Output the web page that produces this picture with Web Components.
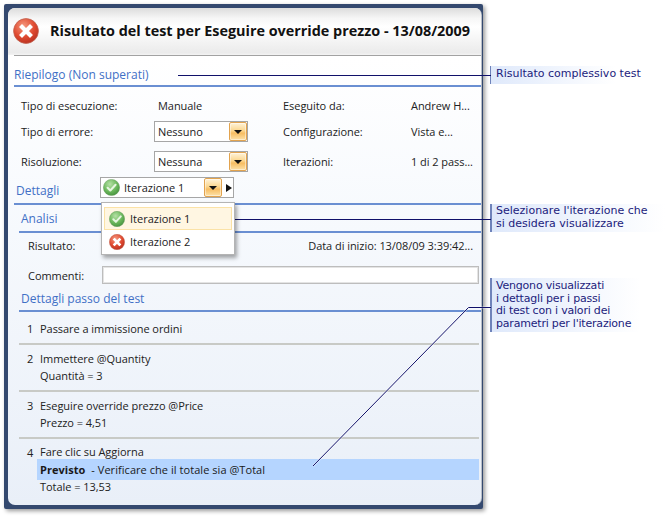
<!DOCTYPE html>
<html lang="it">
<head>
<meta charset="utf-8">
<title>Risultato del test</title>
<style>
html, body { margin: 0; padding: 0; background: #fff; }
body { font: 11px "Open Sans", "Liberation Sans", sans-serif; color: #222; letter-spacing: -0.05px; }
</style>
</head>
<body>
<test-page>
    <result-window slot="window" heading="Risultato del test per Eseguire override prezzo - 13/08/2009">
        <section-head style="margin-left:6px;height:19px;padding-top:10px;">Riepilogo (Non superati)</section-head>
        <summary-grid>
            <span>Tipo di esecuzione:</span><span>Manuale</span><span>Eseguito da:</span><span>Andrew H...</span>
            <span>Tipo di errore:</span><combo-box>Nessuno</combo-box><span>Configurazione:</span><span>Vista e...</span>
            <span>Risoluzione:</span><combo-box>Nessuna</combo-box><span>Iterazioni:</span><span>1 di 2 pass...</span>
        </summary-grid>
        <section-head style="margin-left:6px;padding-left:2px;height:21px;padding-top:10px;">Dettagli<iteration-picker></iteration-picker></section-head>
        <section-head style="margin-left:11px;padding-left:2px;height:21px;padding-top:5px;">Analisi</section-head>
        <info-row></info-row>
        <comment-row></comment-row>
        <section-head style="margin-left:11px;padding-left:2px;height:20px;padding-top:6px;">Dettagli passo del test</section-head>
        <test-step num="1" style="padding:8px 0 6px;"><span>Passare a immissione ordini</span></test-step>
        <test-step num="2"><span>Immettere @Quantity</span><span>Quantità = 3</span></test-step>
        <test-step num="3"><span>Eseguire override prezzo @Price</span><span>Prezzo = 4,51</span></test-step>
        <test-step num="4" last><span style="height:15px;line-height:15px;">Fare clic su Aggiorna</span><expected-line><b>Previsto</b>&nbsp; - Verificare che il totale sia @Total</expected-line><span style="height:13px;line-height:13px;">Totale = 13,53</span></test-step>
    </result-window>
    <call-out slot="notes" style="margin-top:66px;padding-top:2px;padding-bottom:3px;border-left-width:1px;padding-left:5px;">Risultato complessivo test</call-out>
    <call-out slot="notes" style="margin-top:120.5px;width:175px;">Selezionare l'iterazione che<br>si desidera visualizzare</call-out>
    <call-out slot="notes" style="margin-top:46px;width:150px;padding-top:2px;letter-spacing:-0.2px;">Vengono visualizzati<br>i dettagli per i passi<br>di test con i valori dei<br>parametri per l'iterazione</call-out>
</test-page>

<script>
class StatusIcon extends HTMLElement {
    constructor() {
        super();
        const shadowRoot = this.attachShadow({mode: 'open'});
        const fail = this.getAttribute('type') === 'fail';
        const size = this.getAttribute('size') || 16;
        const id = fail ? 'r' : 'g';
        const stops = fail
            ? '<stop offset="0" stop-color="#f59a80"/><stop offset=".55" stop-color="#e04a30"/><stop offset="1" stop-color="#b02a1c"/>'
            : '<stop offset="0" stop-color="#b5e0a5"/><stop offset=".55" stop-color="#6cb85c"/><stop offset="1" stop-color="#3c8a38"/>';
        const mark = fail
            ? '<path d="M9 9 L17 17 M17 9 L9 17" stroke="#fff" stroke-width="4.2" stroke-linecap="square" fill="none"/>'
            : '<path d="M7 13.4 L11.2 17.6 L19.2 8.8" stroke="#e6f5e0" stroke-width="3.2" stroke-linecap="round" stroke-linejoin="round" fill="none"/>';
        shadowRoot.innerHTML = '<style>:host{display:inline-block;line-height:0;flex:none} svg{display:block}</style>' +
            '<svg width="' + size + '" height="' + size + '" viewBox="0 0 26 26">' +
            '<defs><radialGradient id="' + id + '" cx=".4" cy=".3" r=".8">' + stops + '</radialGradient></defs>' +
            '<circle cx="13" cy="13" r="12.4" fill="url(#' + id + ')" stroke="' + (fail ? '#c0604c' : '#6b9c60') + '" stroke-width=".8"/>' +
            mark + '</svg>';
    }
}
customElements.define('status-icon', StatusIcon);

class DropButton extends HTMLElement {
    constructor() {
        super();
        const shadowRoot = this.attachShadow({mode: 'open'});
        shadowRoot.innerHTML = '<style>' +
            ':host{display:flex;align-items:center;justify-content:center;width:18px;height:100%;box-sizing:border-box;' +
            'border:1px solid #e2a34e;border-radius:2px;background:linear-gradient(#fff3d8,#fbd68e 45%,#f7bd62 60%,#fde2a8);box-shadow:inset 0 0 0 1px rgba(255,255,255,.45)}' +
            'i{display:block;width:0;height:0;border:4px solid transparent;border-top:4px solid #111;border-bottom:0}' +
            '</style><i></i>';
    }
}
customElements.define('drop-button', DropButton);

class ComboBox extends HTMLElement {
    constructor() {
        super();
        const shadowRoot = this.attachShadow({mode: 'open'});
        shadowRoot.innerHTML = '<style>' +
            ':host{display:flex;align-items:center;justify-content:space-between;width:94px;height:21px;box-sizing:border-box;' +
            'border:1px solid #a6a6a6;background:#fff;padding-left:3px}' +
            '</style><slot></slot><drop-button></drop-button>';
    }
}
customElements.define('combo-box', ComboBox);

class IterationPicker extends HTMLElement {
    constructor() {
        super();
        const shadowRoot = this.attachShadow({mode: 'open'});
        shadowRoot.innerHTML = '<style>' +
            ':host{display:block;position:absolute;left:86px;top:5px;width:134px;height:21px;color:#222;font-size:11px}' +
            '.box{display:flex;align-items:center;height:100%;box-sizing:border-box;border:1px solid #a6a6a6;background:#fff;padding-left:2px}' +
            '.label{margin-left:4px;flex:1}' +
            '.arrow{width:0;height:0;border:4px solid transparent;border-left:6px solid #111;border-right:0;margin:0 1px 0 4px}' +
            '.menu{position:absolute;left:1px;top:25px;width:134px;height:53px;box-sizing:border-box;border:1px solid #b4b4b4;background:#fff;padding:4px 2px;box-shadow:2px 3px 4px rgba(0,0,0,.35);z-index:2}' +
            '.item{display:flex;align-items:center;height:23px;box-sizing:border-box;padding-left:4px;border:1px solid transparent}' +
            '.item span{margin-left:5px}' +
            '.on{background:#fff6e2;border-color:#fbe2a6}' +
            '</style>' +
            '<div class="box"><status-icon size="17"></status-icon><span class="label">Iterazione 1</span><drop-button></drop-button><i class="arrow"></i></div>' +
            '<div class="menu">' +
            '<div class="item on"><status-icon size="16"></status-icon><span>Iterazione 1</span></div>' +
            '<div class="item"><status-icon type="fail" size="16"></status-icon><span>Iterazione 2</span></div>' +
            '</div>';
    }
}
customElements.define('iteration-picker', IterationPicker);

class SectionHead extends HTMLElement {
    constructor() {
        super();
        const shadowRoot = this.attachShadow({mode: 'open'});
        shadowRoot.innerHTML = '<style>' +
            ':host{display:block;position:relative;font-size:12px;line-height:18px;letter-spacing:0;color:#3f70c6;border-bottom:2px solid #6a8fd2}' +
            '</style><slot></slot>';
    }
}
customElements.define('section-head', SectionHead);

class SummaryGrid extends HTMLElement {
    constructor() {
        super();
        const shadowRoot = this.attachShadow({mode: 'open'});
        shadowRoot.innerHTML = '<style>' +
            ':host{display:grid;grid-template-columns:133px 129px 128px 1fr;grid-template-rows:34px 30px 21px;margin-left:13px;line-height:21px}' +
            '::slotted(span:nth-child(-n+4)){padding-top:8px}' +
            '::slotted(span:nth-child(2)){padding-left:4px}' +
            '</style><slot></slot>';
    }
}
customElements.define('summary-grid', SummaryGrid);

class InfoRow extends HTMLElement {
    constructor() {
        super();
        const shadowRoot = this.attachShadow({mode: 'open'});
        shadowRoot.innerHTML = '<style>' +
            ':host{display:flex;justify-content:space-between;height:33px;box-sizing:border-box;padding:5px 8px 0 20px;line-height:16px}' +
            '</style><span>Risultato:</span><span>Data di inizio: 13/08/09 3:39:42...</span>';
    }
}
customElements.define('info-row', InfoRow);

class CommentRow extends HTMLElement {
    constructor() {
        super();
        const shadowRoot = this.attachShadow({mode: 'open'});
        shadowRoot.innerHTML = '<style>' +
            ':host{display:flex;align-items:center;height:18px;padding:0 2px 0 20px}' +
            'span{width:74px;flex:none}' +
            'div{flex:1;height:100%;box-sizing:border-box;border:1px solid #bdbdbd;box-shadow:inset 0 0 0 1px #e4e4e4;background:#fff}' +
            '</style><span>Commenti:</span><div></div>';
    }
}
customElements.define('comment-row', CommentRow);

class TestStep extends HTMLElement {
    constructor() {
        super();
        const shadowRoot = this.attachShadow({mode: 'open'});
        shadowRoot.innerHTML = '<style>' +
            ':host{display:grid;grid-template-columns:21px 1fr;margin:0 2px 0 11px;padding:5px 0 6px;line-height:17px;border-bottom:2px solid #c8cac6}' +
            ':host([last]){border-bottom:0;padding-bottom:0}' +
            '.num{padding-left:8px}' +
            '.lines{display:flex;flex-direction:column}' +
            '</style><div class="num">' + this.getAttribute('num') + '</div><div class="lines"><slot></slot></div>';
    }
}
customElements.define('test-step', TestStep);

class ExpectedLine extends HTMLElement {
    constructor() {
        super();
        const shadowRoot = this.attachShadow({mode: 'open'});
        shadowRoot.innerHTML = '<style>' +
            ':host{display:block;height:21px;line-height:21px;margin-left:-3px;padding-left:3px;background:#b5d5ff;color:#1a1a1a;letter-spacing:.05px}' +
            '</style><slot></slot>';
    }
}
customElements.define('expected-line', ExpectedLine);

class ResultWindow extends HTMLElement {
    constructor() {
        super();
        const shadowRoot = this.attachShadow({mode: 'open'});
        shadowRoot.innerHTML = '<style>' +
            ':host{display:block;width:479px;height:505px;box-sizing:border-box;padding:4px 1px 4px 4px;background:#34496f;border-radius:2px;box-shadow:2px 2px 4px rgba(0,0,0,.4)}' +
            '.inner{height:100%;box-sizing:border-box;border-radius:7px;overflow:hidden;background:linear-gradient(#fff 10%,#f6f9fd 45%,#e9eff8);border-right:1px solid #b8bec8}' +
            'header{display:flex;align-items:center;height:47px;padding:0 0 2px 5px;box-sizing:border-box;background:linear-gradient(#dcdcdc,#f6f6f6 22%,#fff 40%,#ebebeb 95%,#f4f4f4)}' +
            'h1{margin:0 0 0 11px;font-size:14.4px;letter-spacing:0;font-weight:700;color:#111;white-space:nowrap}' +
            '.rule{height:1px;background:#a2a2a2;margin-left:6px}' +
            '</style>' +
            '<div class="inner"><header><status-icon type="fail" size="26"></status-icon><h1>' + this.getAttribute('heading') + '</h1></header>' +
            '<div class="rule"></div><slot></slot></div>';
    }
}
customElements.define('result-window', ResultWindow);

class CallOut extends HTMLElement {
    constructor() {
        super();
        const shadowRoot = this.attachShadow({mode: 'open'});
        shadowRoot.innerHTML = '<style>' +
            ':host{display:block;box-sizing:border-box;width:125px;padding:1px 0 2px 4px;border-left:2px solid #6f83ba;' +
            'font:11px/12.5px "DejaVu Sans",sans-serif;letter-spacing:0;color:#1c1c7c;white-space:nowrap;background:linear-gradient(90deg,#dfe9fb,#fff)}' +
            '</style><slot></slot>';
    }
}
customElements.define('call-out', CallOut);

class TestPage extends HTMLElement {
    constructor() {
        super();
        const shadowRoot = this.attachShadow({mode: 'open'});
        shadowRoot.innerHTML = '<style>' +
            ':host{display:flex;position:relative;width:666px;height:517px;box-sizing:border-box;padding:4px 0 0 4px;overflow:hidden}' +
            '.notes{display:flex;flex-direction:column;margin-left:7px;margin-top:-4px}' +
            'svg{position:absolute;left:0;top:0;pointer-events:none}' +
            '</style>' +
            '<slot name="window"></slot><div class="notes"><slot name="notes"></slot></div>' +
            '<svg width="666" height="517" fill="none">' +
            '<path d="M178 75.5H491M216 219.5H491" stroke="#10106a"/>' +
            '<path d="M313 466L468.5 307.5H491" stroke="#fff" stroke-width="2" opacity=".5"/>' +
            '<path d="M313 466L468.5 307.5H491" stroke="#10106a"/>' +
            '</svg>';
    }
}
customElements.define('test-page', TestPage);
</script>
</body>
</html>
